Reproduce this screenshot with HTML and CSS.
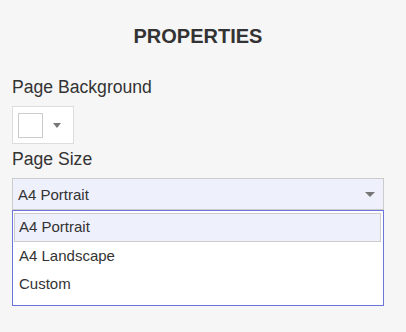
FILE: index.html
```html
<!DOCTYPE html>
<html lang="en">
<head>
    <meta charset="UTF-8">
    <meta name="viewport" content="width=device-width, initial-scale=1.0">
    <title>Properties</title>
    <link rel="stylesheet" href="styles.css">
</head>
<body>
    <div class="panel">
        <h2 class="panel-title">PROPERTIES</h2>

        <!-- Fondo de pagina -->
        <label class="field-label">Page Background</label>
        <button class="color-btn">
            <span class="swatch"></span>
            <span class="caret"></span>
        </button>

        <!-- Tamano de pagina -->
        <label class="field-label">Page Size</label>
        <div class="select">
            <span>A4 Portrait</span>
            <span class="caret caret-wide"></span>
        </div>
        <div class="options">
            <div class="option selected">A4 Portrait</div>
            <div class="option">A4 Landscape</div>
            <div class="option">Custom</div>
        </div>
    </div>
</body>
</html>
```

FILE: styles.css
```css
body {
    font-family: "Liberation Sans", Arial, sans-serif;
    margin: 0;
    padding: 0;
    background-color: #f6f6f6;
    color: #333;
}
.panel {
    width: 372px;
    margin-left: 12px;
    padding-top: 25px;
}
.panel-title {
    margin: 0 0 29px;
    font-size: 20px;
    line-height: 23px;
    font-weight: bold;
    text-align: center;
}
.field-label {
    display: block;
    font-size: 17.6px;
    line-height: 20px;
    margin-bottom: 9px;
}
.color-btn {
    display: flex;
    align-items: center;
    width: 62px;
    height: 38px;
    padding: 0 0 0 5px;
    margin: 0 0 5px;
    background: #fff;
    border: 1px solid #ddd;
    cursor: pointer;
}
.swatch {
    width: 23px;
    height: 23px;
    border: 1px solid #ccc;
    background: #fff;
}
.caret {
    width: 0;
    height: 0;
    margin-left: 10px;
    border-left: 4.5px solid transparent;
    border-right: 4.5px solid transparent;
    border-top: 5px solid #777;
}
.caret-wide {
    margin-left: 0;
    margin-right: 8px;
    border-left-width: 5px;
    border-right-width: 5px;
}
.select {
    display: flex;
    align-items: center;
    justify-content: space-between;
    height: 30px;
    padding-left: 5px;
    font-size: 15px;
    background: #eef0fb;
    border: 1px solid #ccc;
}
.options {
    padding: 2px 1px 6px;
    background: #fff;
    border: 1px solid #6a75d8;
    border-top-width: 1px;
}
.option {
    height: 26.5px;
    line-height: 26.5px;
    padding-left: 4px;
    margin-right: 1px;
    font-size: 15px;
    border: 1px solid transparent;
}
.option.selected {
    background: #eef0fb;
    border-color: #ccc;
}
```
